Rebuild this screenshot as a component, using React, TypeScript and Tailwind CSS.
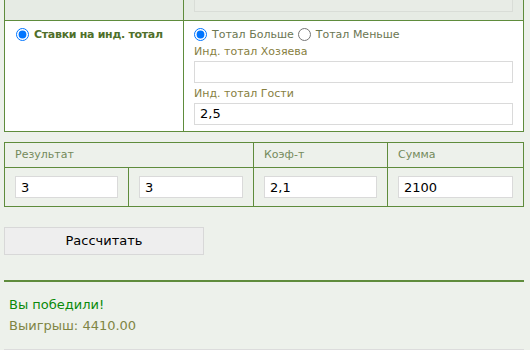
const font = { fontFamily: '"DejaVu Sans", Verdana, sans-serif' };

function TextInput({ value, className = "" }: { value?: string; className?: string }) {
  return (
    <input
      type="text"
      defaultValue={value}
      className={`box-border h-[22px] border border-[#dadada] bg-white px-[5px] text-[13px] text-black outline-none ${className}`}
      style={font}
    />
  );
}

export default function App() {
  return (
    <div className="h-[350px] w-[530px] overflow-hidden bg-[#edf1eb]" style={font}>
      <div className="ml-[4px] w-[520px]">
        {/* Ставки */}
        <div className="border-x border-b border-[#5f8c3c]">
          <div className="flex h-[21px] border-b border-[#5f8c3c] bg-[#e6ebe4]">
            <div className="w-[179px] border-r border-[#5f8c3c]" />
            <div className="flex-1 px-[10px]">
              <div className="h-[12px] border-x border-b border-[#d9ddd7] bg-[#e8ece6]" />
            </div>
          </div>
          <div className="flex h-[110px] bg-white">
            <div className="flex w-[179px] items-start border-r border-[#5f8c3c] pl-[11px] pt-[7px]">
              <input type="radio" defaultChecked name="kind" className="m-0 h-[13px] w-[13px]" />
              <span className="ml-[5px] text-[11px] leading-[13px] font-bold tracking-[-0.3px] text-[#4f6f2a]">
                Ставки на инд. тотал
              </span>
            </div>
            <div className="flex-1 px-[10px] pt-[7px]">
              <div className="flex items-center text-[11px] leading-[13px] text-[#6b7652]">
                <input type="radio" defaultChecked name="tot" className="m-0 h-[13px] w-[13px]" />
                <span className="ml-[5px]">Тотал Больше</span>
                <input type="radio" name="tot" className="my-0 ml-[4px] mr-0 h-[13px] w-[13px]" />
                <span className="ml-[5px]">Тотал Меньше</span>
              </div>
              <div className="mt-[4px] text-[11px] leading-[14px] text-[#87803f]">Инд. тотал Хозяева</div>
              <TextInput className="mt-[1px] w-full" />
              <div className="mt-[4px] text-[11px] leading-[14px] text-[#87803f]">Инд. тотал Гости</div>
              <TextInput value="2,5" className="mt-[1px] w-full" />
            </div>
          </div>
        </div>

        {/* Результат */}
        <div className="mt-[10px] border border-[#5f8c3c]">
          <div className="flex h-[25px] items-center border-b border-[#5f8c3c] text-[11px] text-[#748a5c]">
            <div className="flex h-full w-[249px] items-center border-r border-[#5f8c3c] pl-[10px]">Результат</div>
            <div className="flex h-full w-[134px] items-center border-r border-[#5f8c3c] pl-[10px]">Коэф-т</div>
            <div className="flex h-full flex-1 items-center pl-[10px]">Сумма</div>
          </div>
          <div className="flex h-[38px] items-center">
            <div className="flex h-full w-[124px] items-center border-r border-[#5f8c3c] px-[10px]">
              <TextInput value="3" className="w-full" />
            </div>
            <div className="flex h-full w-[125px] items-center border-r border-[#5f8c3c] px-[10px]">
              <TextInput value="3" className="w-full" />
            </div>
            <div className="flex h-full w-[134px] items-center border-r border-[#5f8c3c] px-[10px]">
              <TextInput value="2,1" className="w-full" />
            </div>
            <div className="flex h-full flex-1 items-center px-[10px]">
              <TextInput value="2100" className="w-full" />
            </div>
          </div>
        </div>

        <button
          type="button"
          className="mt-[20px] h-[28px] w-[200px] border border-[#d8d8d8] bg-[#eeeeee] text-[13px] text-black"
          style={font}
        >
          Рассчитать
        </button>

        <div className="mt-[25px] h-[2px] bg-[#5f8c3c]" />

        <div className="pl-[5px] pt-[12px]">
          <div className="text-[13px] leading-[21px] text-[#0a8a0a]">Вы победили!</div>
          <div className="text-[13px] leading-[21px] text-[#7f8544]">Выигрыш: 4410.00</div>
        </div>

        <div className="mt-[13px] h-[1px] bg-[#dcdcdc]" />
      </div>
    </div>
  );
}
